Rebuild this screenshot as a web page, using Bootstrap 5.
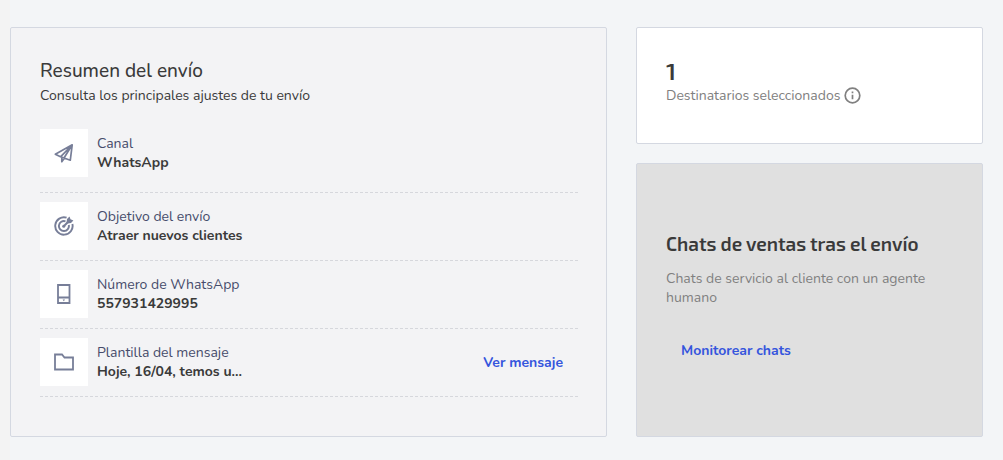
<!DOCTYPE html>
<html lang="es">
<head>
<meta charset="utf-8">
<meta name="viewport" content="width=device-width, initial-scale=1">
<title>Resumen del envío</title>
<link rel="stylesheet" href="https://cdn.jsdelivr.net/npm/bootstrap@5.3.0/dist/css/bootstrap.min.css">
<style>
  body { background: #f3f5f7; color: #3a3a3a; font: 14px/19px Nunito, "Open Sans", sans-serif; border-left: 10px solid #f3f3f3; }
  .overview { display: grid; grid-template-columns: minmax(0, 597fr) minmax(0, 347fr); gap: 29px; padding: 27px 20px 23px 0; }
  .side { gap: 19px; }
  .panel { border: 1px solid #d4d8e1; border-radius: 2px; padding: 29px; }
  .panel-summary { background: #f3f3f5; padding-right: 28px; padding-bottom: 39px; }
  .panel-recipients { padding-bottom: 38px; }
  .panel-chats { background: #e0e0e0; }
  .title { font-size: 19px; line-height: 29px; font-weight: 500; }
  .count, .chats-title { font-family: "Exo 2", "Noto Sans", sans-serif; font-weight: 600; }
  .count { font-size: 24px; line-height: 27px; margin-bottom: 2px; }
  .chats-title { font-size: 19px; line-height: 26px; margin-bottom: 12px; }
  .summary-item { border-bottom: 1px dashed #d6d7dc; padding: 9px 0 10px; gap: 9px; }
  .summary-item:first-child { padding: 0 0 15px; }
  .tile { width: 48px; height: 48px; color: #777e98; }
  .tile svg, .info { fill: none; stroke: currentColor; stroke-width: 2; }
  .name { color: #464c6b; }
  .muted { color: #808080; }
  .action { color: #3555dd; font-size: 14px; line-height: 19px; padding: 10px 15px; font-weight: 700; }
</style>
</head>
<body>
<main class="overview">
  <section class="panel panel-summary">
    <h1 class="title mb-0">Resumen del envío</h1>
    <p class="mb-4">Consulta los principales ajustes de tu envío</p>
    <ul class="list-unstyled mb-0">
      <li class="summary-item d-flex align-items-center">
        <span class="tile bg-white d-flex align-items-center justify-content-center flex-shrink-0">
          <svg width="20" height="20" viewBox="0 0 20 20" aria-hidden="true"><path d="M18.2 1.800 1.300 11.200l5.200 2.600 9.800 3.400zM18.200 1.800 6.500 13.800M18.200 1.800 10 15M7.800 14.200v4.500l2.700-3.600z" stroke-width="1.700" stroke-linejoin="round"/></svg>
        </span>
        <div><div class="name">Canal</div><strong class="d-block">WhatsApp</strong></div>
      </li>
      <li class="summary-item d-flex align-items-center">
        <span class="tile bg-white d-flex align-items-center justify-content-center flex-shrink-0">
          <svg width="20" height="20" viewBox="0 0 20 20" aria-hidden="true"><path d="M12.600 1.700A8.700 8.700 0 1 0 18.400 8M11.500 5.300A5 5 0 1 0 14.800 9" stroke-width="1.900"/><path d="M9.500 10.500 15 5" stroke-width="2"/><path d="M12.500 6.500 13 3 15.500.6 16.500 3.200 19.400 4.500 17 7 13.500 7.500z" fill="currentColor" stroke="none"/><circle cx="9.700" cy="10.300" r="1.500" fill="currentColor" stroke="none"/></svg>
        </span>
        <div><div class="name">Objetivo del envío</div><strong class="d-block">Atraer nuevos clientes</strong></div>
      </li>
      <li class="summary-item d-flex align-items-center">
        <span class="tile bg-white d-flex align-items-center justify-content-center flex-shrink-0">
          <svg width="20" height="20" viewBox="0 0 20 20" aria-hidden="true"><path d="M4 1h11.500v18H4zM4 13.500h11.500" stroke-width="1.800"/><path d="M8.600 15.500h2.400l-1.200 1.800z" fill="currentColor" stroke="none"/></svg>
        </span>
        <div><div class="name">Número de WhatsApp</div><strong class="d-block">557931429995</strong></div>
      </li>
      <li class="summary-item d-flex align-items-center">
        <span class="tile bg-white d-flex align-items-center justify-content-center flex-shrink-0">
          <svg width="20" height="20" viewBox="0 0 20 20" aria-hidden="true"><path d="M1 17.500V2.500h7l2.500 3H19v12z" stroke-width="1.800"/></svg>
        </span>
        <div><div class="name">Plantilla del mensaje</div><strong class="d-block">Hoje, 16/04, temos u...</strong></div>
        <button type="button" class="btn border-0 action ms-auto">Ver mensaje</button>
      </li>
    </ul>
  </section>
  <div class="side d-flex flex-column">
    <section class="panel panel-recipients bg-white">
      <div class="count">1</div>
      <div class="muted d-flex align-items-center gap-1">Destinatarios seleccionados
        <svg class="info" width="17" height="17" viewBox="0 0 17 17" role="img" aria-label="Información"><circle cx="8.500" cy="8.500" r="7.300" stroke-width="1.700"/><path d="M8.500 7.700v4.500M8.500 4.500v1.700" stroke-width="1.700"/></svg>
      </div>
    </section>
    <section class="panel panel-chats flex-grow-1 d-flex flex-column justify-content-center align-items-start">
      <h2 class="chats-title">Chats de ventas tras el envío</h2>
      <p class="muted mb-0">Chats de servicio al cliente con un agente humano</p>
      <button type="button" class="btn border-0 action mt-4">Monitorear chats</button>
    </section>
  </div>
</main>
<script src="https://cdn.jsdelivr.net/npm/bootstrap@5.3.0/dist/js/bootstrap.bundle.min.js"></script>
</body>
</html>
